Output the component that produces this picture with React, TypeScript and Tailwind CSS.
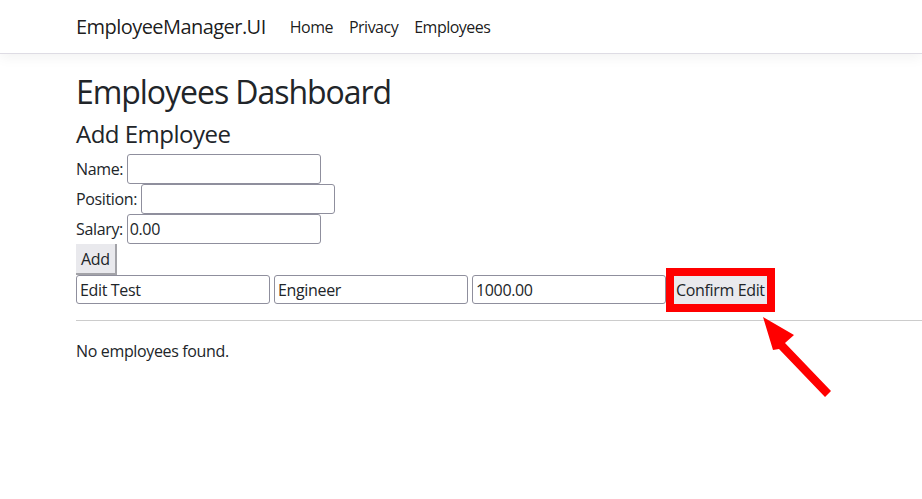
const font = { fontFamily: '"Open Sans", "Noto Sans", sans-serif' };

function Field({ label, value }: { label: string; value?: string }) {
    return (
        <div className="flex h-[30px] items-center">
            <label className="text-base leading-6">{label}&nbsp;</label>
            <input
                defaultValue={value}
                className="h-[30px] w-[194px] rounded-[3px] border border-[#8f8f9d] bg-white px-[2px] text-base tracking-[-0.35px] text-[#212529] outline-none"
            />
        </div>
    );
}

export default function App() {
    return (
        <div className="relative min-h-[499px] bg-white tracking-[-0.35px] text-[#212529]" style={font}>
            {/* Navbar */}
            <header className="border-b border-[#dedce4] bg-white shadow-[0_4px_12px_rgba(0,0,0,0.05)]">
                <nav className="flex h-[53px] items-center pl-[76px]">
                    <span className="mr-4 text-[20px] leading-[30px] tracking-[-0.55px] text-black/90">EmployeeManager.UI</span>
                    <div className="flex items-center">
                        {['Home', 'Privacy', 'Employees'].map(link => (
                            <a key={link} className="px-2 text-base leading-6 tracking-[-0.5px] text-black/90">
                                {link}
                            </a>
                        ))}
                    </div>
                </nav>
            </header>

            <main className="pt-[18px] pl-[76px]">
                <h1 className="text-[32px] leading-[40px] tracking-[-1.05px]">Employees Dashboard</h1>
                <h3 className="mt-[5px] text-[24px] leading-[34px] tracking-[-0.5px]">Add Employee</h3>

                {/* Add form */}
                <div className="mt-[3px] flex flex-col">
                    <Field label="Name:" />
                    <Field label="Position:" />
                    <Field label="Salary:" value="0.00" />
                    <div className="h-[31px]">
                        <button className="h-[31px] border-r-2 border-b-2 border-[#a3a3a8] bg-[#e9e9ed] px-[5px] text-base leading-6">
                            Add
                        </button>
                    </div>
                </div>

                {/* Edit row */}
                <div className="flex h-[29px] items-center gap-[4px]">
                    <input defaultValue="Edit Test" className="h-[29px] w-[194px] rounded-[3px] border border-[#8f8f9d] px-[3px] text-base tracking-[-0.35px] outline-none" />
                    <input defaultValue="Engineer" className="h-[29px] w-[194px] rounded-[3px] border border-[#8f8f9d] px-[3px] text-base tracking-[-0.35px] outline-none" />
                    <input defaultValue="1000.00" className="h-[29px] w-[194px] rounded-[3px] border border-[#8f8f9d] px-[3px] text-base tracking-[-0.35px] outline-none" />
                    <button className="ml-[4px] h-[28px] bg-[#e9e9ed] px-[2px] text-base leading-6 outline-8 outline-[#ff0000] outline-solid">
                        Confirm Edit
                    </button>
                </div>

                <hr className="mt-4 border-t border-[#cccccc]" />
                <p className="mt-[18px] text-base leading-6">No employees found.</p>
            </main>

            {/* Annotation arrow */}
            <svg className="absolute left-[755px] top-[310px]" width="90" height="95" viewBox="0 0 90 95">
                <polygon points="8,7 39,25 30,33 76,81 70,87 24,39 18,40" fill="#ff0000" />
            </svg>
        </div>
    );
}
